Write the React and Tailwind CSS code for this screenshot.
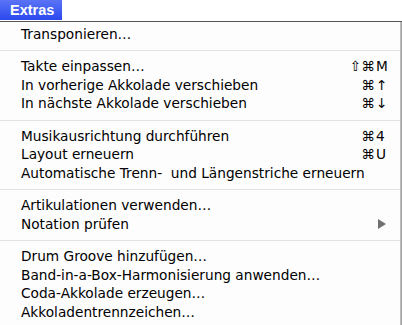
const groups = [
  [{ label: "Transponieren…" }],
  [
    { label: "Takte einpassen…", mod: "⇧⌘", key: "M" },
    { label: "In vorherige Akkolade verschieben", mod: "⌘", key: "↑" },
    { label: "In nächste Akkolade verschieben", mod: "⌘", key: "↓" },
  ],
  [
    { label: "Musikausrichtung durchführen", mod: "⌘", key: "4" },
    { label: "Layout erneuern", mod: "⌘", key: "U" },
    { label: "Automatische Trenn-\u00a0 und Längenstriche erneuern" },
  ],
  [
    { label: "Artikulationen verwenden…" },
    { label: "Notation prüfen", submenu: true },
  ],
  [
    { label: "Drum Groove hinzufügen…" },
    { label: "Band-in-a-Box-Harmonisierung anwenden…" },
    { label: "Coda-Akkolade erzeugen…" },
    { label: "Akkoladentrennzeichen…" },
  ],
];

function Item({ item }) {
  return (
    <div className="flex h-[18.5px] items-center pl-[21px] pr-[13px]">
      <span className="flex-1 whitespace-nowrap">{item.label}</span>
      {item.key && (
        <span className="flex">
          <span className="w-[30px] text-right">{item.mod}</span>
          <span className="w-[12px] pl-[1px]">{item.key}</span>
        </span>
      )}
      {item.submenu && (
        <svg width="8" height="10" viewBox="0 0 8 10" className="mr-[1px]">
          <path d="M0 0 L8 5 L0 10 Z" fill="#707070" />
        </svg>
      )}
    </div>
  );
}

export default function App() {
  return (
    <div className="w-[402px] h-[325px] overflow-hidden bg-white text-black text-[13.7px] font-['DejaVu_Sans',sans-serif]">
      <div className="h-[21px] flex bg-white">
        <div className="w-[62px] h-[20px] bg-gradient-to-b from-[#5b73f6] to-[#2b46ee] text-white font-bold text-[14.5px] font-['Liberation_Sans',sans-serif] pl-[10px] leading-[20px]">
          Extras
        </div>
      </div>
      <div className="h-[1px] bg-[#555]" />
      <div className="flex h-[303px]">
        <div className="w-[400px] bg-[#fdfdfd] pt-[3px] pb-[3px]">
          {groups.map((g, i) => (
            <div key={i}>
              {i > 0 && (
                <div className="h-[14px] flex items-center">
                  <div className="w-full h-[1px] bg-[#e2e2e2]" />
                </div>
              )}
              {g.map((item) => (
                <Item key={item.label} item={item} />
              ))}
            </div>
          ))}
        </div>
        <div className="w-[2px] bg-gradient-to-r from-[#c8c8c8] to-[#9a9a9a]" />
      </div>
    </div>
  );
}
